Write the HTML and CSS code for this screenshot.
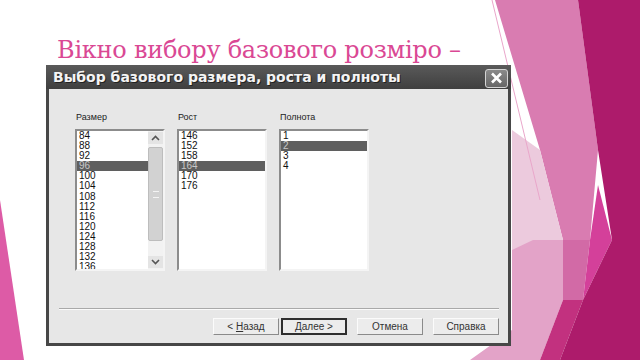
FILE: index.html
```html
<!DOCTYPE html>
<html lang="uk">
<head>
    <meta charset="UTF-8">
    <title>Вікно вибору базового розміру</title>
    <link rel="stylesheet" href="styles.css">
</head>
<body>
    <!-- decorative slide shapes -->
    <svg class="deco" width="640" height="360" viewBox="0 0 640 360">
        <polygon points="0,200 24,360 0,360" fill="#dd5ba6"/>
        <polygon points="495,0 578,0 598,150 590,240 563,240 540,150" fill="#d97cb1"/>
        <polygon points="512,130 540,150 563,240 533,250 512,250" fill="#eccadd"/>
        <polygon points="512,250 533,240 563,240 563,300 540,360 470,360 512,330" fill="#e3a3c8"/>
        <polygon points="563,240 590,240 583,300 563,300" fill="#d26aa6"/>
        <polygon points="598,185 612,240 583,300 590,240" fill="#d4409a"/>
        <polygon points="540,360 563,300 583,300 560,360" fill="#c2317f"/>
        <polygon points="578,0 640,0 640,360 560,360 583,300 612,240 598,150" fill="#ad1b6b"/>
        <line x1="492" y1="0" x2="540" y2="200" stroke="#e9a6ca" stroke-width="1"/>
    </svg>

    <div class="slide">
        <h1 class="slide-title">Вікно вибору базового розміро –</h1>

        <div class="dialog">
            <div class="titlebar">
                <span class="titlebar-text">Выбор базового размера, роста и полноты</span>
                <span class="close-btn">
                    <svg width="13" height="12" viewBox="0 0 13 12"><path d="M2 1.5 L11 10.5 M11 1.5 L2 10.5" stroke="#fff" stroke-width="2.6"/></svg>
                </span>
            </div>
            <div class="dialog-body">
                <div class="columns">
                    <div class="column">
                        <div class="label">Размер</div>
                        <div class="listbox">
                            <div class="items">
                                <div class="item">84</div>
                                <div class="item">88</div>
                                <div class="item">92</div>
                                <div class="item selected">96</div>
                                <div class="item">100</div>
                                <div class="item">104</div>
                                <div class="item">108</div>
                                <div class="item">112</div>
                                <div class="item">116</div>
                                <div class="item">120</div>
                                <div class="item">124</div>
                                <div class="item">128</div>
                                <div class="item">132</div>
                                <div class="item">136</div>
                            </div>
                            <div class="scrollbar">
                                <div class="sb-btn">
                                    <svg width="9" height="6" viewBox="0 0 9 6"><path d="M1 5 L4.5 1.5 L8 5" fill="none" stroke="#555" stroke-width="1.6"/></svg>
                                </div>
                                <div class="sb-thumb"><span class="grip"></span></div>
                                <div class="sb-track"></div>
                                <div class="sb-btn">
                                    <svg width="9" height="6" viewBox="0 0 9 6"><path d="M1 1 L4.5 4.5 L8 1" fill="none" stroke="#555" stroke-width="1.6"/></svg>
                                </div>
                            </div>
                        </div>
                    </div>
                    <div class="column">
                        <div class="label">Рост</div>
                        <div class="listbox">
                            <div class="items">
                                <div class="item">146</div>
                                <div class="item">152</div>
                                <div class="item">158</div>
                                <div class="item selected">164</div>
                                <div class="item">170</div>
                                <div class="item">176</div>
                            </div>
                        </div>
                    </div>
                    <div class="column">
                        <div class="label">Полнота</div>
                        <div class="listbox">
                            <div class="items">
                                <div class="item">1</div>
                                <div class="item selected">2</div>
                                <div class="item">3</div>
                                <div class="item">4</div>
                            </div>
                        </div>
                    </div>
                </div>

                <div class="separator"></div>

                <div class="buttons">
                    <span class="btn">&lt; <u>Н</u>азад</span>
                    <span class="btn default"><u>Д</u>алее &gt;</span>
                    <span class="btn gap">Отмена</span>
                    <span class="btn gap">Справка</span>
                </div>
            </div>
        </div>
    </div>
</body>
</html>
```

FILE: styles.css
```css
body {
    margin: 0;
    width: 640px;
    height: 360px;
    overflow: hidden;
    background-color: #fff;
    position: relative;
    font-family: "Liberation Sans", Arial, sans-serif;
}
.deco {
    position: absolute;
    top: 0;
    left: 0;
}
.slide {
    position: relative;
}
.slide-title {
    margin: 0;
    height: 65px;
    box-sizing: border-box;
    padding: 35px 0 0 57px;
    font-family: "DejaVu Serif", serif;
    font-weight: normal;
    font-size: 24px;
    letter-spacing: -0.25px;
    line-height: 30px;
    color: #da4894; /* pink heading */
    white-space: nowrap;
}

/* dialog window */
.dialog {
    position: relative;
    margin-left: 46px;
    width: 465px;
    box-sizing: border-box;
    border: 3px solid #474747;
    border-top-width: 0;
    background-color: #e7e7e7;
}
.titlebar {
    height: 24px;
    display: flex;
    align-items: center;
    justify-content: space-between;
    background: linear-gradient(#5a5a5a, #3f3f3f);
    margin: 0 -3px;
    padding-left: 7px;
    padding-right: 3px;
}
.titlebar-text {
    font-family: "DejaVu Sans", sans-serif;
    font-weight: bold;
    font-size: 14px;
    color: #f4f4f4;
    text-shadow: 1px 1px 0 #222;
}
.close-btn {
    width: 21px;
    height: 17px;
    margin-top: 2px;
    border: 1px solid #d4d4d4;
    border-radius: 3px;
    background: linear-gradient(#8a8a8a, #666);
    display: flex;
    align-items: center;
    justify-content: center;
}
.dialog-body {
    padding: 23px 9px 8px 10px;
}
.columns {
    display: flex;
    gap: 12px;
    padding-left: 16px;
}
.column {
    width: 90px;
}
.label {
    font-size: 9px;
    line-height: 10px;
    color: #222;
    padding-left: 1px;
    margin-bottom: 7px;
}
.listbox {
    height: 142px;
    box-sizing: border-box;
    border: 2px solid;
    border-color: #8c8c8c #f4f4f4 #f4f4f4 #8c8c8c;
    background-color: #fff;
    display: flex;
    overflow: hidden;
}
.items {
    flex: 1;
}
.item {
    height: 10.1px;
    line-height: 10px;
    font-size: 10px;
    color: #111;
    padding-left: 2px;
    overflow: hidden;
}
.item.selected {
    background-color: #5f5f5f;
    color: #c8c8c8;
}
.scrollbar {
    width: 15px;
    display: flex;
    flex-direction: column;
    background-color: #f2f2f2;
}
.sb-btn {
    height: 12px;
    display: flex;
    align-items: center;
    justify-content: center;
    background-color: #e4e4e4;
    margin: 1px 0;
}
.sb-thumb {
    height: 94px;
    margin-top: 2px;
    box-sizing: border-box;
    border: 1px solid #bdbdbd;
    border-radius: 2px;
    background-color: #d2d2d2;
    display: flex;
    align-items: center;
    justify-content: center;
}
.grip {
    width: 6px;
    height: 5px;
    border-top: 1px solid #f4f4f4;
    border-bottom: 1px solid #f4f4f4;
}
.sb-track {
    flex: 1;
}
.separator {
    margin-top: 37px;
    height: 1px;
    background-color: #a9a9a9;
    border-bottom: 1px solid #fafafa;
}
.buttons {
    display: flex;
    justify-content: flex-end;
    margin-top: 8px;
}
.btn {
    width: 66px;
    height: 17px;
    box-sizing: border-box;
    border: 1px solid;
    border-color: #fbfbfb #8a8a8a #8a8a8a #fbfbfb;
    background-color: #ececec;
    font-size: 10px;
    line-height: 15px;
    text-align: center;
    color: #333;
    margin-left: 2px;
}
.btn.gap {
    margin-left: 10px;
}
.btn.default {
    border: 2px solid #2e2e2e;
    line-height: 13px;
}
```
